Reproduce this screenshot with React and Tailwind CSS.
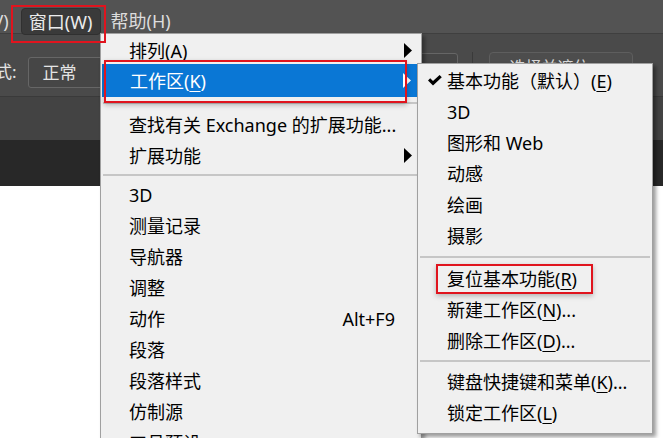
import React from "react";

// right-pointing triangle used for submenu indicators
const Arrow = ({ white }) => (
  <svg width="8" height="15" viewBox="0 0 8 15" className="shrink-0">
    <path d="M0 0 L8 7.5 L0 15 Z" fill={white ? "#ffffff" : "#000000"} />
  </svg>
);

const Check = () => (
  <svg width="14" height="11" viewBox="0 0 14 11">
    <path d="M0 5.5 L2.2 3.3 L5 6.1 L11.6 0 L13.8 2.2 L5 10.6 Z" fill="#000" />
  </svg>
);

const Key = ({ children }) => (
  <span className="underline underline-offset-[3px] decoration-1">{children}</span>
);

const Sep = ({ h, mt }) => (
  <div className={`flex flex-col ${h}`}>
    <div className={`${mt} h-[2px] bg-[#c6c6c6] mx-[2px]`} />
  </div>
);

const MainItem = ({ children, arrow, shortcut, active }) => (
  <div
    className={`flex items-center h-[31px] pl-[28px] pr-[9px] ${
      active ? "bg-[#0a77d5] text-white mx-[1px] pl-[27px] h-[33px]" : "text-black"
    }`}
  >
    <span className="whitespace-nowrap">{children}</span>
    {shortcut && <span className="ml-auto mr-[17px]">{shortcut}</span>}
    {arrow && (
      <span className="ml-auto">
        <Arrow white={active} />
      </span>
    )}
  </div>
);

const SubItem = ({ children, checked }) => (
  <div className="flex items-center h-[31px] text-black">
    <div className="w-[29px] pl-[10px] flex items-center">{checked && <Check />}</div>
    <span className="whitespace-nowrap">{children}</span>
  </div>
);

export default function App() {
  return (
    <div className="relative w-[663px] h-[438px] overflow-hidden bg-white font-['Noto_Sans','Noto_Sans_CJK_SC',sans-serif] text-[18px] leading-none">
      {/* menu bar */}
      <div className="h-[34px] bg-[#535353] border-b border-[#3f3f3f] flex items-start text-[#dcdcdc]">
        <span className="ml-[-13px] mt-[12px]">(V)</span>
        <div className="ml-[12px] mt-[8px] h-[27px] w-[80px] rounded-[4px] bg-[#3a3a3a] border border-[#303030] flex items-center justify-center text-[#ececec]">
          窗口(W)
        </div>
        <span className="ml-[10px] mt-[12px]">帮助(H)</span>
      </div>

      {/* options bar */}
      <div className="h-[63px] bg-[#4a4a4a] border-b border-[#3a3a3a] flex items-start text-[#e4e4e4]">
        <span className="ml-[-5px] mt-[29px] text-[17px]">式:</span>
        <div className="ml-[11px] mt-[23px] h-[31px] w-[110px] rounded-[3px] border border-[#666666] bg-[#464646] flex items-center pl-[14px] text-[17px]">
          正常
        </div>
        <div className="ml-[267px] mt-[19px] h-[28px] w-[53px] rounded-[3px] border border-[#666666] bg-[#464646]" />
        <div className="ml-[14px] mt-[18px] h-[28px] w-px bg-[#3a3a3a]" />
        <div className="ml-[16px] mt-[18px] h-[30px] w-[144px] rounded-[4px] border border-[#5e5e5e] bg-[#4d4d4d] flex items-center pl-[20px] text-[16px] text-[#d8d8d8]">
          选择并遮住...
        </div>
      </div>

      {/* panel strip + dark band */}
      <div className="h-[43px] bg-[#434343]" />
      <div className="h-[46px] bg-[#282828]" />

      {/* main Window menu */}
      <div className="absolute left-[100px] top-[33px] w-[322px] h-[420px] border border-[#a0a0a0] bg-[#f0f0f0] shadow-[3px_3px_4px_rgba(0,0,0,0.35)]">
        <div className="h-[30px] flex items-center pl-[28px] pr-[9px] pt-[3px]">
          <span>
            排列(<Key>A</Key>)
          </span>
          <span className="ml-auto">
            <Arrow />
          </span>
        </div>
        <MainItem active arrow>
          工作区(<Key>K</Key>)
        </MainItem>
        <Sep h="h-[12px]" mt="mt-[5px]" />
        <MainItem>查找有关 Exchange 的扩展功能...</MainItem>
        <MainItem arrow>扩展功能</MainItem>
        <Sep h="h-[8px]" mt="mt-[3px]" />
        <MainItem>3D</MainItem>
        <MainItem>测量记录</MainItem>
        <MainItem>导航器</MainItem>
        <MainItem>调整</MainItem>
        <MainItem shortcut="Alt+F9">动作</MainItem>
        <MainItem>段落</MainItem>
        <MainItem>段落样式</MainItem>
        <MainItem>仿制源</MainItem>
        <MainItem>工具预设</MainItem>
      </div>

      {/* workspace submenu */}
      <div className="absolute left-[417px] top-[63px] w-[236px] h-[371px] border border-[#a0a0a0] bg-[#f0f0f0] pt-[1px] shadow-[3px_3px_4px_rgba(0,0,0,0.4)]">
        <SubItem checked>
          基本功能（默认）(<Key>E</Key>)
        </SubItem>
        <SubItem>3D</SubItem>
        <SubItem>图形和 Web</SubItem>
        <SubItem>动感</SubItem>
        <SubItem>绘画</SubItem>
        <SubItem>摄影</SubItem>
        <Sep h="h-[12px]" mt="mt-[5px]" />
        <SubItem>
          复位基本功能(<Key>R</Key>)
        </SubItem>
        <SubItem>
          新建工作区(<Key>N</Key>)...
        </SubItem>
        <SubItem>
          删除工作区(<Key>D</Key>)...
        </SubItem>
        <Sep h="h-[10px]" mt="mt-[4px]" />
        <SubItem>
          键盘快捷键和菜单(<Key>K</Key>)...
        </SubItem>
        <SubItem>
          锁定工作区(<Key>L</Key>)
        </SubItem>
      </div>

      {/* red annotation frames */}
      <div className="absolute left-[11px] top-[5px] w-[95px] h-[38px] border-2 border-[#e0141e]" />
      <div className="absolute left-[104px] top-[60px] w-[303px] h-[43px] border-2 border-[#e0141e] shadow-[0_2px_5px_rgba(0,0,0,0.25)]" />
      <div className="absolute left-[436px] top-[264px] w-[157px] h-[30px] border-2 border-[#e0141e] shadow-[0_2px_5px_rgba(0,0,0,0.25)]" />
    </div>
  );
}
